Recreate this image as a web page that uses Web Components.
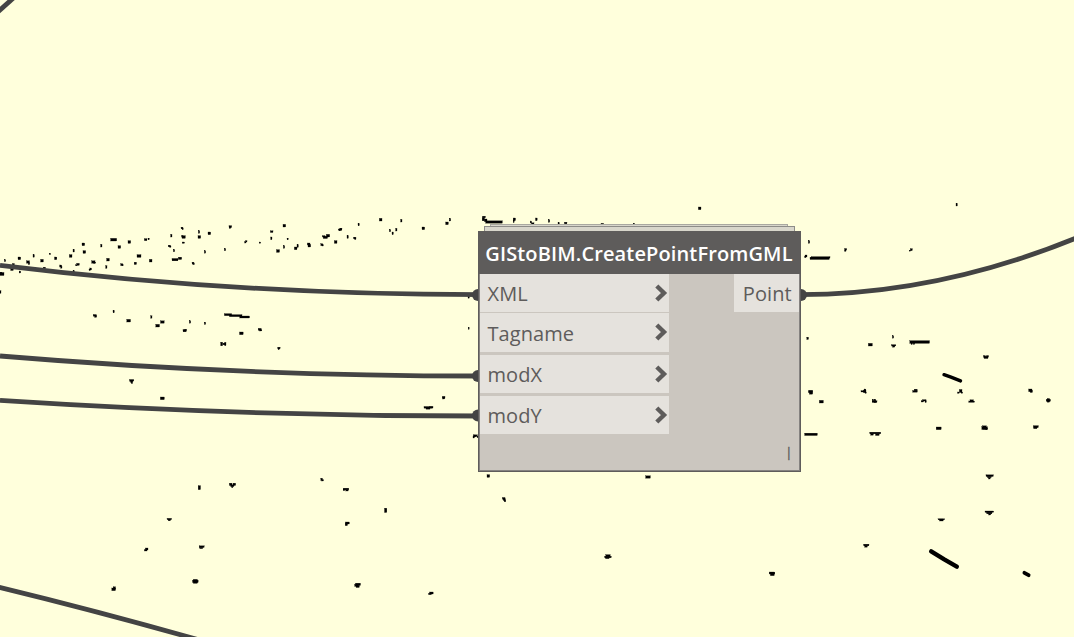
<!DOCTYPE html>
<html lang="en">
<head>
<meta charset="utf-8">
<title>Graph workspace</title>
<style>
  html, body { margin: 0; height: 100%; overflow: hidden; background: #ffffdc; }
</style>
</head>
<body>
<graph-canvas>
  <point-cloud slot="background"></point-cloud>
  <graph-wires slot="wires"></graph-wires>
  <graph-node slot="node" heading="GIStoBIM.CreatePointFromGML" lacing="|">
    <in-port slot="in" style="--h:38px;--gap:1px">XML</in-port>
    <in-port slot="in" style="--h:39px;--gap:3px;--shift:1px">Tagname</in-port>
    <in-port slot="in" style="--h:38px;--gap:3px">modX</in-port>
    <in-port slot="in" style="--h:38px;--gap:0px">modY</in-port>
    <out-port slot="out">Point</out-port>
  </graph-node>
</graph-canvas>
<script>
class Base extends HTMLElement {
  constructor() {
    super();
    this.attachShadow({ mode: 'open' }).innerHTML = this.view();
  }
}

customElements.define('graph-canvas', class extends Base {
  view() {
    return `<style>
      :host { display: block; position: relative; width: 1074px; height: 637px; overflow: hidden;
        background: #ffffdc; font-family: "Open Sans", "Noto Sans", sans-serif; color: #5e5c5b; }
      ::slotted(*) { position: absolute; left: 0; top: 0; }
      ::slotted(graph-node) { left: 478px; top: 231px; }
    </style>
    <slot name="background"></slot><slot name="wires"></slot><slot name="node"></slot>`;
  }
});

/* Projected points, grouped in tiles. Each mark: centre x, centre y, width, height, in thirds of a pixel. */
const TILES = [
  [0, 205, `15,167,4,6 58,160,8,8 84,171,9,7 87,176,4,6 101,153,4,7 126,167,8,8 150,147,4,4 167,160,7,8 182,183,6,6 184,187,4,5
    40,178,6,5 36,194,8,5 60,201,4,6 6,207,12,9 2,205,8,7 1,261,4,8 133,189,7,5 221,199,4,4 212,153,8,8 221,137,4,8 253,141,8,8 250,118,8,8
    304,122,4,8 341,104,18,8 358,126,8,8 388,111,8,8 437,104,8,6 446,102,4,5 324,164,8,8 280,171,10,7 284,173,6,4 319,186,4,8
    234,178,8,6 229,181,5,3 272,192,5,6 269,195,4,3 365,179,6,6 368,181,4,3 406,175,7,7 417,153,12,8 452,167,8,8 525,164,18,7 540,160,10,7
    579,174,6,5 581,177,5,4 508,123,7,5 511,125,4,4 522,137,4,7 550,113,7,4 551,96,10,8 547,94,4,4 546,69,6,5 548,72,4,4 514,92,4,8 597,81,4,8
    598,96,8,8 628,85,8,8 615,141,4,7 675,134,4,7 691,65,8,6 690,68,4,5`],
  [220, 205, `155,80,8,5 154,100,4,8 193,62,8,8 203,102,4,5 192,126,4,8 174,138,9,8 227,130,8,8 233,123,4,8 266,117,8,6 268,122,8,8
    305,119,5,6 308,121,4,4 347,111,8,8 316,97,13,7 311,94,8,4 324,92,10,8 361,74,8,6 363,72,6,5 358,76,3,3 383,96,4,8 404,99,7,5 406,101,4,5
    416,59,4,7 482,44,8,8 510,77,4,7 518,85,4,8 529,74,4,8 544,47,4,8 610,70,8,8 681,55,8,8 690,44,4,8 76,112,4,4 79,109,4,4 120,113,4,4 746,276,4,7`],
  [470, 205, `42,36,9,5 40,43,7,9 47,46,8,8 72,51,50,7 133,43,7,8 131,49,3,8 183,51,3,6 188,56,8,5 199,43,5,8 237,48,4,8 266,55,4,5 287,54,8,5 397,57,8,4 492,57,4,4
    -4,370,3,6`],
  [640, 205, `179,10,8,8 507,111,4,8 498,153,6,6 496,156,4,4 539,160,58,7 542,157,56,4 503,400,5,7`],
  [80, 300, `44,46,9,5 47,49,6,6 101,35,4,7 146,62,11,8 214,51,4,7 247,66,11,7 233,77,11,8 330,66,4,7 314,92,10,7 317,90,5,4 375,70,4,7
    444,44,22,6 467,47,38,6 494,51,29,6 484,100,11,8 539,88,9,6 542,91,7,4 425,132,6,11 432,132,6,5 436,132,4,10 597,144,7,5 596,147,4,4
    155,241,13,5 155,245,7,4 156,249,4,4 247,295,12,8`],
  [420, 390, `71,22,8,6 71,25,5,4 25,52,26,5 24,55,12,5 34,52,10,4 165,138,4,6 166,137,12,5 161,141,4,6 173,141,4,4`],
  [820, 190, `410,44,4,8 77,178,6,5 76,182,4,4 274,179,6,6 270,182,4,3 151,464,12,8 219,441,4,7 221,466,13,4 221,469,7,5
    299,456,59,8 275,461,4,5 282,461,4,5 498,502,12,7 493,499,5,5 503,499,5,5`],
  [820, 330, `134,184,8,8 129,184,12,4 135,180,5,6 137,188,4,4 285,184,14,5 287,180,9,5 422,183,8,9 415,188,5,4 426,188,4,4 631,181,10,8 634,184,7,7
    685,211,13,6 685,211,7,11 455,212,10,5 455,215,17,4 313,211,10,4 307,214,7,4 317,215,4,5 164,215,14,5 159,212,4,8 165,213,5,10
    356,295,15,8 493,293,11,11 494,294,17,7 500,297,5,5 648,290,14,6 646,293,10,6 166,309,33,5 156,313,8,5 172,314,11,5
    509,437,22,5 508,441,12,4 508,445,5,4 4,215,12,8 -27,187,10,11 -29,185,12,6 -27,313,38,7`],
  [820, 470, `364,148,20,3 364,150,11,6 508,125,26,4 508,129,16,5 509,133,6,4 139,225,16,5 138,229,8,5`],
  [100, 465, `298,68,7,12 392,58,8,7 403,58,8,7 397,62,10,5 397,66,4,4 665,43,5,7 668,46,5,4 738,72,17,5 732,75,5,4 741,76,7,4 857,136,7,13
    208,162,14,4 208,165,7,5 742,174,12,6 739,179,7,6 140,252,8,6 137,256,8,4 305,245,15,5 304,249,9,4 286,349,17,7 286,349,12,12
    41,373,11,8 43,369,7,7 774,358,15,7 770,361,12,6 773,365,10,5 994,384,11,6 990,387,9,4`],
  [470, 465, `55,33,8,8 101,100,8,5 103,104,7,5 105,108,5,5 534,36,14,7 414,272,13,6 414,276,20,5 412,279,11,4 906,324,17,6 907,329,12,6`]
];

customElements.define('point-cloud', class extends Base {
  view() {
    const tiles = TILES.map(([x, y, marks]) =>
      `<g transform="translate(${x} ${y}) scale(.33333)">` + marks.trim().split(/\s+/).map(m => {
        const [cx, cy, w, h] = m.split(',').map(Number);
        return `<rect x="${cx - w / 2}" y="${cy - h / 2}" width="${w}" height="${h}"/>`;
      }).join('') + '</g>').join('');
    return `<style>:host { display: block; } svg { display: block; }</style>
      <svg width="1074" height="637">
        <g stroke="#000" stroke-width=".8">${tiles}</g>
        <g fill="none" stroke="#000" stroke-linecap="round" stroke-linejoin="round">
          <path stroke-width="3.4" d="M944 374.7l7 2.5 9.5 3.7"/>
          <path stroke-width="4.4" d="M931.2 551.3l13 8 12.6 7.3"/>
          <path stroke-width="3.8" d="M1024.4 572.8l4.2 2.4"/>
        </g>
      </svg>`;
  }
});

customElements.define('graph-wires', class extends Base {
  view() {
    return `<style>:host { display: block; } svg { display: block; }</style>
      <svg width="1074" height="637">
        <g fill="none" stroke="#444" stroke-width="4.8">
          <path d="M-2 11.8L14.5 -3"/>
          <path d="M0 265.3Q240 294.7 480 294.7"/>
          <path d="M0 356Q240 376 480 376"/>
          <path d="M0 400.4Q240 416 480 416"/>
          <path d="M800 294.6Q937.5 294.6 1076 238"/>
          <path d="M-2 587Q95 610.5 200 640.2"/>
        </g>
        <g fill="#444">
          <circle cx="478" cy="295" r="6"/><circle cx="478" cy="376" r="6"/>
          <circle cx="478" cy="415.5" r="6"/><circle cx="801" cy="295" r="6"/>
        </g>
      </svg>`;
  }
});

customElements.define('graph-node', class extends Base {
  view() {
    return `<style>
      :host { display: block; width: 323px; height: 241px; }
      .sheet { position: absolute; box-sizing: border-box; border: 1px solid #8d8c88; border-bottom: 0; background: #d8d6cb; }
      .far { left: 12px; top: -7px; width: 298px; height: 4px; border-color: #a9a8a0; }
      .near { left: 6px; top: -5px; width: 311px; height: 6px; }
      .card { position: relative; box-sizing: border-box; height: 241px; display: flex; flex-direction: column;
        background: #cbc6bf; border: 1px solid #5e5c5b; border-top: 0; box-shadow: inset -1px -1px #858280, inset 1px 0 #858280; }
      header { box-sizing: border-box; height: 43px; margin: 0 -1px; padding-left: 7.3px; background: #5e5c5b; color: #fff;
        font-size: 20px; font-weight: 600; letter-spacing: .13px; line-height: 45px; white-space: nowrap; }
      .ports { display: flex; justify-content: space-between; padding: 0 1px; height: 160px; }
      .in { width: 189px; }
      footer { text-align: right; padding-right: 8px; font-size: 12px; line-height: 37px; color: #5e5c5b; -webkit-text-stroke: .4px #5e5c5b; }
    </style>
    <div class="sheet far"></div><div class="sheet near"></div>
    <div class="card">
      <header>${this.getAttribute('heading')}</header>
      <div class="ports"><div class="in"><slot name="in"></slot></div><div><slot name="out"></slot></div></div>
      <footer>${this.getAttribute('lacing')}</footer>
    </div>`;
  }
});

customElements.define('in-port', class extends Base {
  view() {
    return `<style>
      :host { display: flex; justify-content: space-between; align-items: center; box-sizing: border-box;
        height: var(--h); margin-bottom: var(--gap); padding: 0 1px 0 7.5px; background: #e5e2dd; font-size: 20px; line-height: 38px; }
      span { padding-top: calc(var(--shift, 0px) + 1px); letter-spacing: .08px; }
      svg { display: block; margin-top: -1px; }
    </style>
    <span><slot></slot></span>
    <svg width="13" height="18" viewBox="0 0 13 18"><path d="M1.8 2L9 9 1.8 16" fill="none" stroke="#5e5c5b" stroke-width="4.4"/></svg>`;
  }
});

customElements.define('out-port', class extends Base {
  view() {
    return `<style>
      :host { display: block; box-sizing: border-box; width: 65px; height: 38px; padding-left: 8.8px;
        background: #e5e2dd; font-size: 20px; letter-spacing: .1px; line-height: 39px; }
    </style><slot></slot>`;
  }
});
</script>
</body>
</html>
